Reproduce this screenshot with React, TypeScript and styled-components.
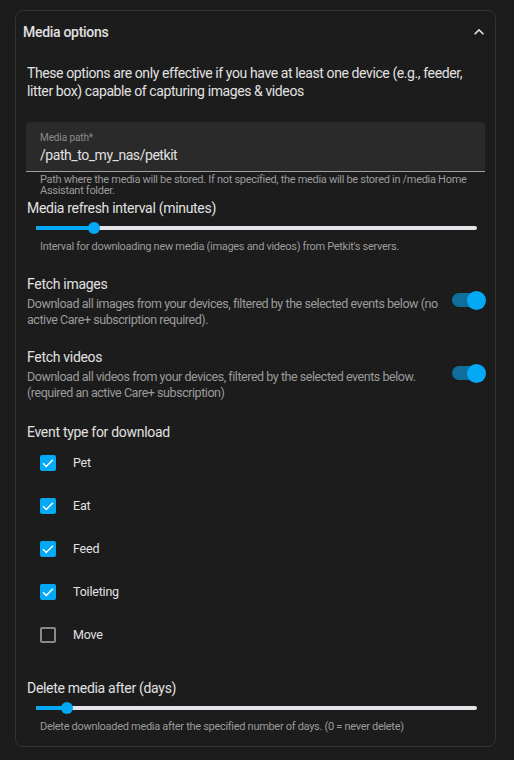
import React from "react";
import styled, { createGlobalStyle } from "styled-components";

const Global = createGlobalStyle`
  html, body { margin: 0; padding: 0; background: #1c1c1c; }
  body { font-family: Roboto, "Noto Sans", sans-serif; color: #e1e1e1; -webkit-font-smoothing: antialiased; }
  * { box-sizing: border-box; }
`;

const Page = styled.div`
  padding: 10px 18px 13px 15px;
`;

const Card = styled.section`
  border: 1px solid #333333;
  border-radius: 8px;
  background: #1c1c1c;
`;

const Header = styled.div`
  height: 42px;
  display: flex;
  align-items: center;
  justify-content: space-between;
  padding: 0 6px 0 7px;
`;

const HeaderTitle = styled.div`
  font-size: 14px;
  font-weight: 500;
  letter-spacing: -0.3px;
  color: #e1e1e1;
`;

const Body = styled.div`
  padding: 11px 10px 14px 10px;
  display: flex;
  flex-direction: column;
`;

const Intro = styled.p`
  margin: 0 0 22px 1px;
  font-size: 14px;
  line-height: 18px;
  letter-spacing: -0.4px;
  color: #e1e1e1;
`;

const Field = styled.div`
  height: 50px;
  background: #2a2a2a;
  border-radius: 4px 4px 0 0;
  border-bottom: 1px solid #9e9e9e;
  padding: 10px 14px 0 14px;
  display: flex;
  flex-direction: column;
`;

const FieldLabel = styled.div`
  font-size: 10px;
  line-height: 12px;
  letter-spacing: -0.1px;
  color: #8c8c8c;
`;

const FieldValue = styled.div`
  font-size: 14px;
  line-height: 20px;
  margin-top: 1px;
  letter-spacing: -0.45px;
  color: #e1e1e1;
`;

const Helper = styled.div<{ $mt?: number }>`
  font-size: 11px;
  line-height: 11px;
  letter-spacing: -0.3px;
  padding: 0 14px;
  margin-top: ${(p) => p.$mt ?? 2}px;
  color: #9b9b9b;
`;

const Title = styled.div<{ $mt?: number }>`
  font-size: 14px;
  line-height: 20px;
  letter-spacing: -0.3px;
  margin-top: ${(p) => p.$mt ?? 0}px;
  padding-left: 1px;
  color: #e1e1e1;
`;

const SliderWrap = styled.div`
  height: 20px;
  padding: 0 8px 0 10px;
  display: flex;
  align-items: center;
`;

const Track = styled.div`
  position: relative;
  flex: 1;
  height: 4px;
  border-radius: 2px;
  background: #e6e3e8;
`;

const Active = styled.div`
  position: absolute;
  left: 0;
  top: 0;
  bottom: 0;
  border-radius: 2px;
  background: #03a9f4;
`;

const Thumb = styled.div`
  position: absolute;
  top: 50%;
  width: 12px;
  height: 12px;
  margin: -6px 0 0 -6px;
  border-radius: 50%;
  background: #03a9f4;
`;

const ToggleRow = styled.div<{ $mt: number }>`
  display: flex;
  align-items: center;
  margin-top: ${(p) => p.$mt}px;
`;

const ToggleText = styled.div`
  flex: 1;
  min-width: 0;
`;

const Desc = styled.div`
  font-size: 12.5px;
  line-height: 16px;
  letter-spacing: -0.45px;
  margin-top: 2px;
  padding-left: 1px;
  color: #9b9b9b;
  padding-right: 4px;
`;

const SwitchBox = styled.div`
  position: relative;
  width: 34px;
  height: 20px;
  margin-right: -1px;
  margin-top: -2px;
  flex: none;
  display: flex;
  align-items: center;
`;

const SwitchTrack = styled.div`
  width: 28px;
  height: 14px;
  border-radius: 7px;
  background: #0f6e9c;
`;

const SwitchThumb = styled.div`
  position: absolute;
  right: 0;
  top: 1px;
  width: 19px;
  height: 19px;
  border-radius: 50%;
  background: #03a9f4;
`;

const CheckList = styled.div`
  display: flex;
  flex-direction: column;
  margin-top: -1px;
`;

const CheckRow = styled.label`
  height: 43px;
  display: flex;
  align-items: center;
  padding-left: 14px;
  gap: 17px;
  font-size: 12.5px;
  letter-spacing: -0.2px;
  color: #e1e1e1;
`;

const Box = styled.span<{ $on: boolean }>`
  width: 16px;
  height: 16px;
  border-radius: 2px;
  flex: none;
  display: flex;
  align-items: center;
  justify-content: center;
  background: ${(p) => (p.$on ? "#03a9f4" : "transparent")};
  border: ${(p) => (p.$on ? "none" : "2px solid #8a8a8a")};
  margin-top: 1px;
`;

const Slider = ({ value }: { value: number }) => (
  <SliderWrap>
    <Track>
      <Active style={{ width: `${value * 100}%` }} />
      <Thumb style={{ left: `${value * 100}%` }} />
    </Track>
  </SliderWrap>
);

const Switch = () => (
  <SwitchBox>
    <SwitchTrack />
    <SwitchThumb />
  </SwitchBox>
);

const Check = ({ label, on }: { label: string; on: boolean }) => (
  <CheckRow>
    <Box $on={on}>
      {on && (
        <svg width="14" height="14" viewBox="0 0 24 24">
          <path d="M3.5 12.5l5.5 5.5L20.5 6.5" fill="none" stroke="#ffffff" strokeWidth="2.6" />
        </svg>
      )}
    </Box>
    <span>{label}</span>
  </CheckRow>
);

export default function App() {
  return (
    <Page>
      <Global />
      <Card>
        <Header>
          <HeaderTitle>Media options</HeaderTitle>
          <svg width="20" height="20" viewBox="0 0 24 24">
            <path fill="#e1e1e1" d="M7.41,15.41L12,10.83L16.59,15.41L18,14L12,8L6,14L7.41,15.41Z" />
          </svg>
        </Header>
        <Body>
          <Intro>
            These options are only effective if you have at least one device (e.g., feeder, litter box) capable of
            capturing images &amp; videos
          </Intro>
          <Field>
            <FieldLabel>Media path*</FieldLabel>
            <FieldValue>/path_to_my_nas/petkit</FieldValue>
          </Field>
          <Helper>
            Path where the media will be stored. If not specified, the media will be stored in /media Home Assistant
            folder.
          </Helper>
          <Title $mt={2}>Media refresh interval (minutes)</Title>
          <Slider value={0.132} />
          <Helper $mt={3}>Interval for downloading new media (images and videos) from Petkit's servers.</Helper>
          <ToggleRow $mt={22}>
            <ToggleText>
              <Title>Fetch images</Title>
              <Desc>
                Download all images from your devices, filtered by the selected events below (no active Care+
                subscription required).
              </Desc>
            </ToggleText>
            <Switch />
          </ToggleRow>
          <ToggleRow $mt={19}>
            <ToggleText>
              <Title>Fetch videos</Title>
              <Desc>
                Download all videos from your devices, filtered by the selected events below. (required an active
                Care+ subscription)
              </Desc>
            </ToggleText>
            <Switch />
          </ToggleRow>
          <Title $mt={21}>Event type for download</Title>
          <CheckList>
            <Check label="Pet" on />
            <Check label="Eat" on />
            <Check label="Feed" on />
            <Check label="Toileting" on />
            <Check label="Move" on={false} />
          </CheckList>
          <Title $mt={22}>Delete media after (days)</Title>
          <Slider value={0.07} />
          <Helper $mt={3}>Delete downloaded media after the specified number of days. (0 = never delete)</Helper>
        </Body>
      </Card>
    </Page>
  );
}
